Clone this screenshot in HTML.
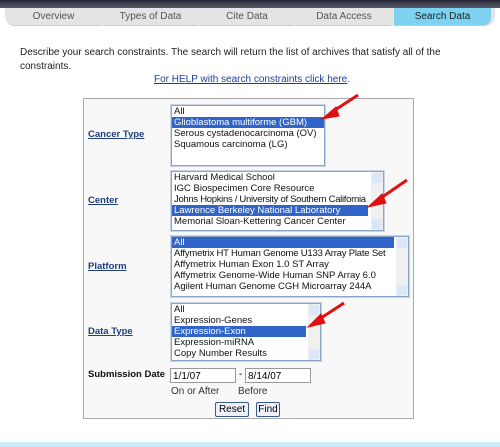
<!DOCTYPE html><html><head><style>
body{margin:0;width:500px;height:447px;background:#fff;position:relative;overflow:hidden;font-family:"Liberation Sans",sans-serif;}
.a{position:absolute}
.tab{position:absolute;top:8px;height:17px;background:#e4e4e4;color:#555;font-size:10px;text-align:center;line-height:17px;border-bottom:1px solid #ccc}
.lb{position:absolute;left:88px;font-size:9.5px;font-weight:bold;color:#1f3f7f;text-decoration:underline}
.lst{position:absolute;background:#fff;border:1px solid #8aa5c5;outline:1px solid #c8d4e2;font-size:9.5px;line-height:11px;color:#111;overflow:hidden}
.lst div{padding-left:2px;white-space:nowrap;height:11px}
.sel{background:#3064c8;color:#fff}
.sb{position:absolute;right:0;top:0;bottom:0;width:12px;background:#f0f0f0}
.sb:before,.sb:after{content:"";position:absolute;left:1px;width:10px;height:10px;background:#dbe6f7;border:0}
.sb:before{top:1px}.sb:after{bottom:1px}
.inp{position:absolute;height:15px;border:1px solid #999;background:#fff;font-size:10px;line-height:15px;padding-left:2px;box-sizing:border-box}
.btn{position:absolute;top:402px;height:15px;border:1px solid #3a5a8a;border-radius:2px;background:#eef2f8;font-size:10px;line-height:13px;text-align:center;box-sizing:border-box}
</style></head><body>
<div class="a" style="left:0;top:0;width:500px;height:8px;background:linear-gradient(#223,#445 50%,#556)"></div>
<div class="a" style="left:5px;top:8px;width:490px;height:18px;background:#e4e4e4;border-radius:0 0 10px 10px"></div>
<div class="tab" style="left:7px;width:93px;border-radius:0 0 0 8px">Overview</div>
<div class="tab" style="left:103px;width:95px">Types of Data</div>
<div class="tab" style="left:200px;width:94px">Cite Data</div>
<div class="tab" style="left:297px;width:94px">Data Access</div>
<div class="tab" style="left:394px;width:97px;background:#7cd2f0;color:#222;border-radius:0 0 8px 0">Search Data</div>
<div class="a" style="left:20px;top:46px;width:460px;font-size:10px;line-height:14px;color:#222">Describe your search constraints. The search will return the list of archives that satisfy all of the constraints.</div>
<div class="a" style="left:154px;top:74px;font-size:10px;color:#1f3f9f"><u>For HELP with search constraints click here</u>.</div>
<div class="a" style="left:83px;top:98px;width:331px;height:321px;background:#f8f8f8;border:1px solid #aaa;box-sizing:border-box"></div>
<div class="lb" style="top:129px">Cancer Type</div>
<div class="lst" style="left:171px;top:105px;width:152px;height:59px"><div>All</div><div class="sel">Glioblastoma multiforme (GBM)</div><div>Serous cystadenocarcinoma (OV)</div><div>Squamous carcinoma (LG)</div></div>
<div class="lb" style="top:195px">Center</div>
<div class="lst" style="left:171px;top:171px;width:211px;height:58px"><div>Harvard Medical School</div><div>IGC Biospecimen Core Resource</div><div style="letter-spacing:-0.3px">Johns Hopkins / University of Southern California</div><div class="sel" style="width:194px">Lawrence Berkeley National Laboratory</div><div>Memorial Sloan-Kettering Cancer Center</div><span class="sb"></span></div>
<div class="lb" style="top:261px">Platform</div>
<div class="lst" style="left:171px;top:236px;width:236px;height:59px"><div class="sel" style="width:220px">All</div><div style="letter-spacing:-0.2px">Affymetrix HT Human Genome U133 Array Plate Set</div><div>Affymetrix Human Exon 1.0 ST Array</div><div>Affymetrix Genome-Wide Human SNP Array 6.0</div><div>Agilent Human Genome CGH Microarray 244A</div><span class="sb"></span></div>
<div class="lb" style="top:326px">Data Type</div>
<div class="lst" style="left:171px;top:303px;width:148px;height:56px"><div>All</div><div>Expression-Genes</div><div class="sel" style="width:132px">Expression-Exon</div><div>Expression-miRNA</div><div>Copy Number Results</div><span class="sb"></span></div>
<div class="a" style="left:88px;top:369px;font-size:9.5px;font-weight:bold;color:#111">Submission Date</div>
<div class="inp" style="left:170px;top:368px;width:66px">1/1/07</div>
<div class="a" style="left:239px;top:369px;font-size:10px">-</div>
<div class="inp" style="left:245px;top:368px;width:66px">8/14/07</div>
<div class="a" style="left:171px;top:386px;font-size:10px;color:#333">On or After</div>
<div class="a" style="left:238px;top:386px;font-size:10px;color:#333">Before</div>
<div class="btn" style="left:215px;width:34px">Reset</div>
<div class="btn" style="left:256px;width:24px">Find</div>
<div class="a" style="left:0;top:442px;width:500px;height:5px;background:#c8ecfa"></div>
<svg class="a" style="left:0;top:0" width="500" height="447">
<g stroke="#e01010" stroke-width="3" fill="#e01010">
<line x1="358" y1="95" x2="332" y2="112"/><polygon points="322,119 336,107 339,116" stroke-width="1"/>
<line x1="407" y1="180" x2="378" y2="200"/><polygon points="368,207 382,194 386,203" stroke-width="1"/>
<line x1="344" y1="303" x2="318" y2="320"/><polygon points="308,327 321,314 325,323" stroke-width="1"/>
</g></svg>
</body></html>
